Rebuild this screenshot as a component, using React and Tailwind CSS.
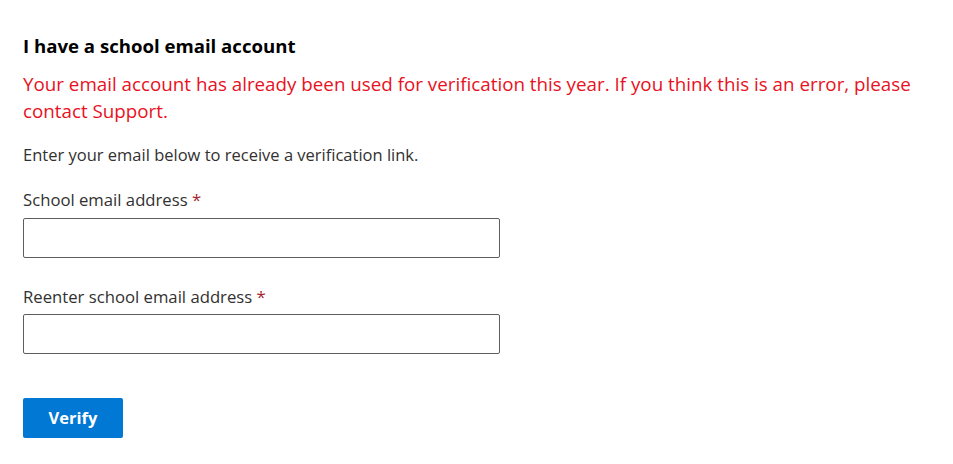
export default function App() {
  const font = { fontFamily: '"Segoe UI", "Open Sans", sans-serif' };
  return (
    <div className="w-[953px] h-[464px] bg-white pl-[23px] pt-[34px]" style={font}>
      <h2 className="text-[18.6px] leading-[24px] font-bold text-black">I have a school email account</h2>
      <p className="mt-[13px] text-[18.8px] leading-[27px] text-[#e81123] w-[910px]">
        Your email account has already been used for verification this year. If you think this is an error, please contact Support.
      </p>
      <p className="mt-[19px] text-[16.5px] leading-[22px] text-[#323130]">Enter your email below to receive a verification link.</p>
      <label className="block mt-[23px] text-[16.7px] leading-[22px] text-[#323130]">
        School email address <span className="text-[#a4262c]">*</span>
      </label>
      <input className="block mt-[7px] w-[477px] h-[40px] border border-[#605e5c] rounded-[2px]" />
      <label className="block mt-[28px] text-[16.7px] leading-[22px] text-[#323130]">
        Reenter school email address <span className="text-[#a4262c]">*</span>
      </label>
      <input className="block mt-[6px] w-[477px] h-[40px] border border-[#605e5c] rounded-[2px]" />
      <button className="block mt-[44px] w-[100px] h-[40px] bg-[#0078d4] rounded-[2px] text-white text-[16.5px] font-bold">Verify</button>
    </div>
  );
}
